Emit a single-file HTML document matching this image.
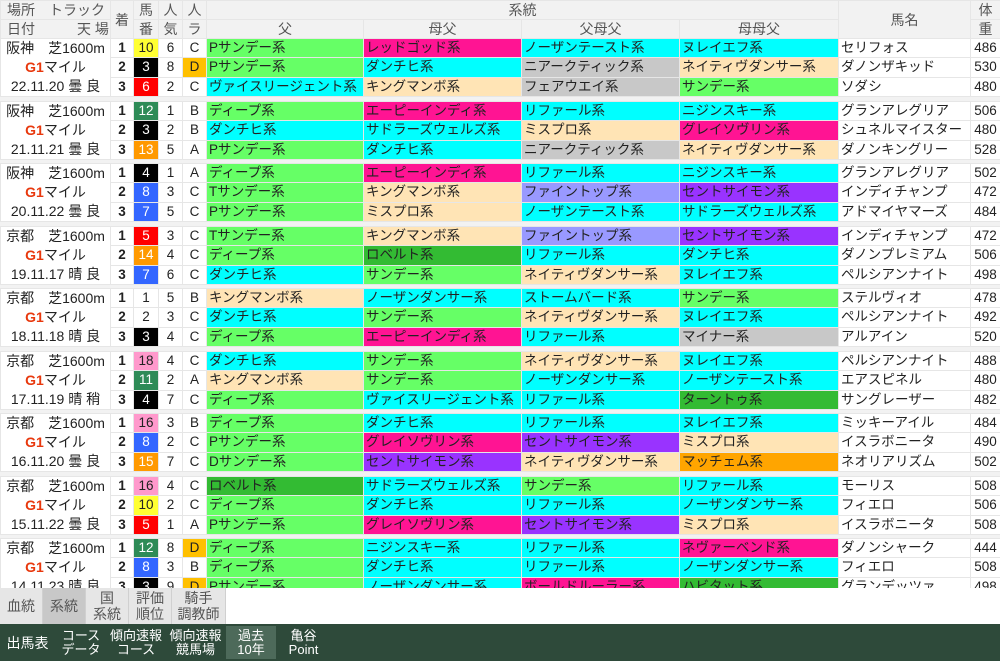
<!DOCTYPE html>
<html><head><meta charset="utf-8"><style>
*{margin:0;padding:0;box-sizing:border-box}
body{width:1000px;height:661px;background:#f2f2f2;font-family:"Liberation Sans","Noto Sans CJK JP",sans-serif;color:#222;overflow:hidden;position:relative}
table{border-collapse:collapse;table-layout:fixed;width:1000px;position:absolute;top:0;left:0}
td,th{font-size:13.5px;line-height:18px;height:19px;white-space:nowrap;overflow:hidden;border:1px solid #e6e6e6;padding:0}
th{background:#f2f2f2;color:#555;font-weight:normal;font-size:14px}
.pl{background:#fff;text-align:center;line-height:19px;font-size:14px;vertical-align:middle}
.r{color:#e8380d;font-weight:bold}
.n{background:#fff;text-align:center;font-weight:bold}
.c{background:#fff;text-align:center}
.g{padding-left:2px}
.nm{background:#fff;padding-left:2px}
.wt{background:#fff;text-align:center}
.sep td{height:4px;border:none;background:#f2f2f2}
.sp5 td{height:5px}
.G{background:#66ff66}.C{background:#00ffff}.M{background:#ff1493}.K{background:#c8c8c8}.P{background:#ffe4b5}.V{background:#9933ff}.L{background:#9999ff}.DG{background:#33bb33}.O{background:#ffa500}
.D{background:#ffc000}
.w1{background:#fff}.w2{background:#000;color:#fff}.w3{background:#f00;color:#fff}.w4{background:#3366ff;color:#fff}.w5{background:#ffff33}.w6{background:#2e8b57;color:#fff}.w7{background:#ff9900;color:#fff}.w8{background:#ff99cc}
.tabs{position:absolute;top:588px;left:0;height:36px;display:flex}
.tabs div{width:43px;height:36px;background:#e6e6e6;border-right:1px solid #d0d0d0;color:#555;font-size:14px;line-height:16px;display:flex;align-items:center;justify-content:center;text-align:center}
.tabs .sel{background:#c8c8c8}
.foot{position:absolute;top:624px;left:0;width:1000px;height:37px;background:#2e4a3a;display:flex;color:#fff}
.foot div{font-size:13px;line-height:14px;display:flex;align-items:center;justify-content:center;text-align:center;height:37px}
.foot .on{background:#4d6a5a;margin:2px 0;height:33px}
</style></head><body>
<table>
<colgroup><col style="width:110px"><col style="width:23px"><col style="width:25px"><col style="width:24px"><col style="width:24px"><col style="width:157px"><col style="width:158px"><col style="width:158px"><col style="width:159px"><col style="width:132px"><col style="width:30px"></colgroup>
<tr><th style="text-align:left;padding-left:6px;line-height:18px">場所　トラック</th><th rowspan="2">着</th><th>馬</th><th>人</th><th>人</th><th colspan="4">系統</th><th rowspan="2">馬名</th><th>体</th></tr>
<tr><th style="text-align:left;padding-left:6px;height:18px">日付　　　天 場</th><th>番</th><th>気</th><th>ラ</th><th>父</th><th>母父</th><th>父母父</th><th>母母父</th><th>重</th></tr>

<tr><td class="pl" rowspan="3">阪神　芝1600m<br><span class="r">G1</span>マイル<br>22.11.20 曇 良</td><td class="n">1</td><td class="c w5">10</td><td class="c">6</td><td class="c">C</td><td class="g G">Pサンデー系</td><td class="g M">レッドゴッド系</td><td class="g C">ノーザンテースト系</td><td class="g C">ヌレイエフ系</td><td class="nm">セリフォス</td><td class="wt">486</td></tr>
<tr><td class="n">2</td><td class="c w2">3</td><td class="c">8</td><td class="c D">D</td><td class="g G">Pサンデー系</td><td class="g C">ダンチヒ系</td><td class="g K">ニアークティック系</td><td class="g P">ネイティヴダンサー系</td><td class="nm">ダノンザキッド</td><td class="wt">530</td></tr>
<tr><td class="n">3</td><td class="c w3">6</td><td class="c">2</td><td class="c">C</td><td class="g C">ヴァイスリージェント系</td><td class="g P">キングマンボ系</td><td class="g K">フェアウエイ系</td><td class="g G">サンデー系</td><td class="nm">ソダシ</td><td class="wt">480</td></tr>
<tr class="sep sp5"><td colspan="11"></td></tr>

<tr><td class="pl" rowspan="3">阪神　芝1600m<br><span class="r">G1</span>マイル<br>21.11.21 曇 良</td><td class="n">1</td><td class="c w6">12</td><td class="c">1</td><td class="c">B</td><td class="g G">ディープ系</td><td class="g M">エーピーインディ系</td><td class="g C">リファール系</td><td class="g C">ニジンスキー系</td><td class="nm">グランアレグリア</td><td class="wt">506</td></tr>
<tr><td class="n">2</td><td class="c w2">3</td><td class="c">2</td><td class="c">B</td><td class="g C">ダンチヒ系</td><td class="g C">サドラーズウェルズ系</td><td class="g P">ミスプロ系</td><td class="g M">グレイソヴリン系</td><td class="nm">シュネルマイスター</td><td class="wt">480</td></tr>
<tr><td class="n">3</td><td class="c w7">13</td><td class="c">5</td><td class="c">A</td><td class="g G">Pサンデー系</td><td class="g C">ダンチヒ系</td><td class="g K">ニアークティック系</td><td class="g P">ネイティヴダンサー系</td><td class="nm">ダノンキングリー</td><td class="wt">528</td></tr>
<tr class="sep"><td colspan="11"></td></tr>

<tr><td class="pl" rowspan="3">阪神　芝1600m<br><span class="r">G1</span>マイル<br>20.11.22 曇 良</td><td class="n">1</td><td class="c w2">4</td><td class="c">1</td><td class="c">A</td><td class="g G">ディープ系</td><td class="g M">エーピーインディ系</td><td class="g C">リファール系</td><td class="g C">ニジンスキー系</td><td class="nm">グランアレグリア</td><td class="wt">502</td></tr>
<tr><td class="n">2</td><td class="c w4">8</td><td class="c">3</td><td class="c">C</td><td class="g G">Tサンデー系</td><td class="g P">キングマンボ系</td><td class="g L">ファイントップ系</td><td class="g V">セントサイモン系</td><td class="nm">インディチャンプ</td><td class="wt">472</td></tr>
<tr><td class="n">3</td><td class="c w4">7</td><td class="c">5</td><td class="c">C</td><td class="g G">Pサンデー系</td><td class="g P">ミスプロ系</td><td class="g C">ノーザンテースト系</td><td class="g C">サドラーズウェルズ系</td><td class="nm">アドマイヤマーズ</td><td class="wt">484</td></tr>
<tr class="sep sp5"><td colspan="11"></td></tr>

<tr><td class="pl" rowspan="3">京都　芝1600m<br><span class="r">G1</span>マイル<br>19.11.17 晴 良</td><td class="n">1</td><td class="c w3">5</td><td class="c">3</td><td class="c">C</td><td class="g G">Tサンデー系</td><td class="g P">キングマンボ系</td><td class="g L">ファイントップ系</td><td class="g V">セントサイモン系</td><td class="nm">インディチャンプ</td><td class="wt">472</td></tr>
<tr><td class="n">2</td><td class="c w7">14</td><td class="c">4</td><td class="c">C</td><td class="g G">ディープ系</td><td class="g DG">ロベルト系</td><td class="g C">リファール系</td><td class="g C">ダンチヒ系</td><td class="nm">ダノンプレミアム</td><td class="wt">506</td></tr>
<tr><td class="n">3</td><td class="c w4">7</td><td class="c">6</td><td class="c">C</td><td class="g C">ダンチヒ系</td><td class="g G">サンデー系</td><td class="g P">ネイティヴダンサー系</td><td class="g C">ヌレイエフ系</td><td class="nm">ペルシアンナイト</td><td class="wt">498</td></tr>
<tr class="sep"><td colspan="11"></td></tr>

<tr><td class="pl" rowspan="3">京都　芝1600m<br><span class="r">G1</span>マイル<br>18.11.18 晴 良</td><td class="n">1</td><td class="c w1">1</td><td class="c">5</td><td class="c">B</td><td class="g P">キングマンボ系</td><td class="g C">ノーザンダンサー系</td><td class="g C">ストームバード系</td><td class="g G">サンデー系</td><td class="nm">ステルヴィオ</td><td class="wt">478</td></tr>
<tr><td class="n">2</td><td class="c w1">2</td><td class="c">3</td><td class="c">C</td><td class="g C">ダンチヒ系</td><td class="g G">サンデー系</td><td class="g P">ネイティヴダンサー系</td><td class="g C">ヌレイエフ系</td><td class="nm">ペルシアンナイト</td><td class="wt">492</td></tr>
<tr><td class="n">3</td><td class="c w2">3</td><td class="c">4</td><td class="c">C</td><td class="g G">ディープ系</td><td class="g M">エーピーインディ系</td><td class="g C">リファール系</td><td class="g K">マイナー系</td><td class="nm">アルアイン</td><td class="wt">520</td></tr>
<tr class="sep sp5"><td colspan="11"></td></tr>

<tr><td class="pl" rowspan="3">京都　芝1600m<br><span class="r">G1</span>マイル<br>17.11.19 晴 稍</td><td class="n">1</td><td class="c w8">18</td><td class="c">4</td><td class="c">C</td><td class="g C">ダンチヒ系</td><td class="g G">サンデー系</td><td class="g P">ネイティヴダンサー系</td><td class="g C">ヌレイエフ系</td><td class="nm">ペルシアンナイト</td><td class="wt">488</td></tr>
<tr><td class="n">2</td><td class="c w6">11</td><td class="c">2</td><td class="c">A</td><td class="g P">キングマンボ系</td><td class="g G">サンデー系</td><td class="g C">ノーザンダンサー系</td><td class="g C">ノーザンテースト系</td><td class="nm">エアスピネル</td><td class="wt">480</td></tr>
<tr><td class="n">3</td><td class="c w2">4</td><td class="c">7</td><td class="c">C</td><td class="g G">ディープ系</td><td class="g C">ヴァイスリージェント系</td><td class="g C">リファール系</td><td class="g DG">ターントゥ系</td><td class="nm">サングレーザー</td><td class="wt">482</td></tr>
<tr class="sep"><td colspan="11"></td></tr>

<tr><td class="pl" rowspan="3">京都　芝1600m<br><span class="r">G1</span>マイル<br>16.11.20 曇 良</td><td class="n">1</td><td class="c w8">16</td><td class="c">3</td><td class="c">B</td><td class="g G">ディープ系</td><td class="g C">ダンチヒ系</td><td class="g C">リファール系</td><td class="g C">ヌレイエフ系</td><td class="nm">ミッキーアイル</td><td class="wt">484</td></tr>
<tr><td class="n">2</td><td class="c w4">8</td><td class="c">2</td><td class="c">C</td><td class="g G">Pサンデー系</td><td class="g M">グレイソヴリン系</td><td class="g V">セントサイモン系</td><td class="g P">ミスプロ系</td><td class="nm">イスラボニータ</td><td class="wt">490</td></tr>
<tr><td class="n">3</td><td class="c w7">15</td><td class="c">7</td><td class="c">C</td><td class="g G">Dサンデー系</td><td class="g V">セントサイモン系</td><td class="g P">ネイティヴダンサー系</td><td class="g O">マッチェム系</td><td class="nm">ネオリアリズム</td><td class="wt">502</td></tr>
<tr class="sep sp5"><td colspan="11"></td></tr>

<tr><td class="pl" rowspan="3">京都　芝1600m<br><span class="r">G1</span>マイル<br>15.11.22 曇 良</td><td class="n">1</td><td class="c w8">16</td><td class="c">4</td><td class="c">C</td><td class="g DG">ロベルト系</td><td class="g C">サドラーズウェルズ系</td><td class="g G">サンデー系</td><td class="g C">リファール系</td><td class="nm">モーリス</td><td class="wt">508</td></tr>
<tr><td class="n">2</td><td class="c w5">10</td><td class="c">2</td><td class="c">C</td><td class="g G">ディープ系</td><td class="g C">ダンチヒ系</td><td class="g C">リファール系</td><td class="g C">ノーザンダンサー系</td><td class="nm">フィエロ</td><td class="wt">506</td></tr>
<tr><td class="n">3</td><td class="c w3">5</td><td class="c">1</td><td class="c">A</td><td class="g G">Pサンデー系</td><td class="g M">グレイソヴリン系</td><td class="g V">セントサイモン系</td><td class="g P">ミスプロ系</td><td class="nm">イスラボニータ</td><td class="wt">508</td></tr>
<tr class="sep"><td colspan="11"></td></tr>

<tr><td class="pl" rowspan="3">京都　芝1600m<br><span class="r">G1</span>マイル<br>14.11.23 晴 良</td><td class="n">1</td><td class="c w6">12</td><td class="c">8</td><td class="c D">D</td><td class="g G">ディープ系</td><td class="g C">ニジンスキー系</td><td class="g C">リファール系</td><td class="g M">ネヴァーベンド系</td><td class="nm">ダノンシャーク</td><td class="wt">444</td></tr>
<tr><td class="n">2</td><td class="c w4">8</td><td class="c">3</td><td class="c">B</td><td class="g G">ディープ系</td><td class="g C">ダンチヒ系</td><td class="g C">リファール系</td><td class="g C">ノーザンダンサー系</td><td class="nm">フィエロ</td><td class="wt">508</td></tr>
<tr><td class="n">3</td><td class="c w2">3</td><td class="c">9</td><td class="c D">D</td><td class="g G">Pサンデー系</td><td class="g C">ノーザンダンサー系</td><td class="g M">ボールドルーラー系</td><td class="g DG">ハビタット系</td><td class="nm">グランデッツァ</td><td class="wt">498</td></tr>
</table>
<div style="position:absolute;top:588px;left:0;width:1000px;height:36px;background:#fff"></div>
<div class="tabs"><div>血統</div><div class="sel">系統</div><div>国<br>系統</div><div>評価<br>順位</div><div style="width:54px">騎手<br>調教師</div></div>
<div class="foot"><div style="width:55px;font-size:14px">出馬表</div><div style="width:52px">コース<br>データ</div><div style="width:58px">傾向速報<br>コース</div><div style="width:61px">傾向速報<br>競馬場</div><div class="on" style="width:50px">過去<br>10年</div><div style="width:55px">亀谷<br>Point</div></div>
</body></html>
